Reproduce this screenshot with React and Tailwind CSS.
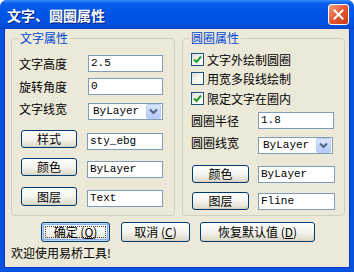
import { useState } from 'react';

const cjk = "font-['SimSun','Noto_Sans_CJK_SC',sans-serif]";
const mono = "font-['Liberation_Mono','Noto_Sans_CJK_SC',monospace]";

function XpButton({ children, className = '', focused = false }) {
  return (
    <button
      className={`relative flex items-center justify-center rounded-[3px] border border-[#003c74] bg-linear-to-b from-[#ffffff] via-[#f5f4ee] to-[#dcd9c9] text-[12px] leading-none text-black ${cjk} ${
        focused ? 'shadow-[inset_0_0_0_1px_#bcd4f6,inset_0_0_0_2px_#89adf3]' : 'shadow-[inset_0_-1px_0_#d6d0c5]'
      } ${className}`}
    >
      {focused && (
        <span className="absolute inset-[3px] border border-dotted border-[#444]" />
      )}
      <span className="relative">{children}</span>
    </button>
  );
}

function TextBox({ value, className = '' }) {
  return (
    <div
      className={`flex h-[17px] items-center border border-[#7f9db9] bg-white pl-[2px] text-[11px] text-black ${mono} ${className}`}
    >
      {value}
    </div>
  );
}

function Combo({ value, className = '' }) {
  return (
    <div
      className={`flex h-[17px] items-center justify-between border border-[#7f9db9] bg-white pl-[4px] pr-[1px] text-[11px] text-black ${mono} ${className}`}
    >
      <span>{value}</span>
      <span className="flex h-[15px] w-[15px] items-center justify-center rounded-[2px] border border-[#b9cdf3] bg-linear-to-b from-[#dbe6fd] to-[#b4c9f7]">
        <svg width="9" height="7" viewBox="0 0 9 7">
          <path d="M1 1.5 L4.5 5 L8 1.5" fill="none" stroke="#4d6185" strokeWidth="2" />
        </svg>
      </span>
    </div>
  );
}

function Check({ checked, label, onToggle }) {
  return (
    <div className="flex h-[13px] items-center pl-[8px]" onClick={onToggle}>
      <span className="flex h-[13px] w-[13px] items-center justify-center border border-[#1c5180] bg-linear-to-br from-[#dcdcd7] via-[#f6f6f3] to-[#ffffff]">
        {checked && (
          <svg width="9" height="9" viewBox="0 0 9 9">
            <path d="M1 4.5 L3.5 7 L8 1.5" fill="none" stroke="#21a121" strokeWidth="2" />
          </svg>
        )}
      </span>
      <span className={`ml-[3px] text-[12px] leading-none text-black ${cjk}`}>{label}</span>
    </div>
  );
}

function GroupBox({ title, className = '', children }) {
  return (
    <div className={`relative h-[178px] rounded-[4px] border border-[#d0d0bf] ${className}`}>
      <span className={`absolute -top-[8px] left-[6px] bg-[#ece9d8] px-[2px] text-[12px] leading-[14px] text-[#0046d5] ${cjk}`}>
        {title}
      </span>
      {children}
    </div>
  );
}

export default function App() {
  const [checks, setChecks] = useState([true, false, true]);
  const toggle = (i) => setChecks((c) => c.map((v, j) => (j === i ? !v : v)));

  return (
    <div className="flex h-[272px] w-[354px] flex-col overflow-hidden rounded-t-[7px] bg-[#0a52dc]">
      {/* TITLE BAR */}
      <div className="flex h-[29px] shrink-0 items-center justify-between bg-[linear-gradient(to_bottom,#3b8cf8_0%,#0a5cec_12%,#0055e6_45%,#0052e2_80%,#0046cc_100%)] pl-[7px] pr-[5px]">
        <span className={`text-[14px] font-bold leading-none text-white [text-shadow:1px_1px_0_#0a1e7a] ${cjk}`}>
          文字、圆圈属性
        </span>
        <span className="flex h-[21px] w-[21px] items-center justify-center rounded-[3px] border border-white bg-linear-to-br from-[#f0a080] via-[#e2572f] to-[#c73a18]">
          <svg width="11" height="11" viewBox="0 0 11 11">
            <path d="M1.5 1.5 L9.5 9.5 M9.5 1.5 L1.5 9.5" stroke="white" strokeWidth="2" strokeLinecap="square" />
          </svg>
        </span>
      </div>

      {/* BODY */}
      <div className="mx-[4px] mb-[4px] flex flex-1 flex-col border-l border-r border-b border-[#0831d9] bg-[#ece9d8] pl-[6px] pt-[9px]">
        <div className="flex gap-[7px]">
          <GroupBox title="文字属性" className="w-[164px]">
            <div className="flex flex-col pl-[7px] pt-[16px]">
              <div className="flex h-[17px] items-center">
                <span className={`w-[69px] text-[12px] ${cjk}`}>文字高度</span>
                <TextBox value="2.5" className="w-[75px]" />
              </div>
              <div className="mt-[6px] flex h-[17px] items-center">
                <span className={`w-[69px] text-[12px] ${cjk}`}>旋转角度</span>
                <TextBox value="0" className="w-[75px]" />
              </div>
              <div className="mt-[8px] flex h-[17px] items-center">
                <span className={`w-[69px] -translate-y-[3px] text-[12px] ${cjk}`}>文字线宽</span>
                <Combo value="ByLayer" className="w-[75px]" />
              </div>
              <div className="mt-[10px] flex h-[20px] items-start pl-[2px]">
                <XpButton className="h-[18px] w-[56px]">样式</XpButton>
                <TextBox value="sty_ebg" className="ml-[10px] mt-[3px] w-[76px]" />
              </div>
              <div className="mt-[8px] flex h-[20px] items-start pl-[2px]">
                <XpButton className="h-[18px] w-[56px]">颜色</XpButton>
                <TextBox value="ByLayer" className="ml-[10px] mt-[3px] w-[76px]" />
              </div>
              <div className="mt-[9px] flex h-[20px] items-start pl-[2px]">
                <XpButton className="h-[19px] w-[56px]">图层</XpButton>
                <TextBox value="Text" className="ml-[10px] mt-[3px] w-[76px]" />
              </div>
            </div>
          </GroupBox>

          <GroupBox title="圆圈属性" className="w-[163px]">
            <div className="flex flex-col pt-[14px]">
              <Check checked={checks[0]} label="文字外绘制圆圈" onToggle={() => toggle(0)} />
              <div className="mt-[6px]">
                <Check checked={checks[1]} label="用宽多段线绘制" onToggle={() => toggle(1)} />
              </div>
              <div className="mt-[7px]">
                <Check checked={checks[2]} label="限定文字在圈内" onToggle={() => toggle(2)} />
              </div>
              <div className="mt-[7px] flex h-[17px] items-center pl-[8px]">
                <span className={`w-[67px] text-[12px] ${cjk}`}>圆圈半径</span>
                <TextBox value="1.8" className="w-[76px]" />
              </div>
              <div className="mt-[8px] flex h-[17px] items-center pl-[8px]">
                <span className={`w-[67px] -translate-y-[3px] text-[12px] ${cjk}`}>圆圈线宽</span>
                <Combo value="ByLayer" className="w-[75px]" />
              </div>
              <div className="mt-[11px] flex h-[18px] items-start pl-[9px]">
                <XpButton className="h-[18px] w-[57px]">颜色</XpButton>
                <TextBox value="ByLayer" className="ml-[9px] mt-[1px] w-[77px]" />
              </div>
              <div className="mt-[9px] flex h-[18px] items-start pl-[9px]">
                <XpButton className="h-[18px] w-[57px]">图层</XpButton>
                <TextBox value="Fline" className="ml-[9px] mt-[1px] w-[77px]" />
              </div>
            </div>
          </GroupBox>
        </div>

        {/* ACTIONS */}
        <div className="mt-[6px] flex pl-[30px]">
          <XpButton focused className="h-[20px] w-[69px]">
            确定 (<span className="underline">O</span>)
          </XpButton>
          <XpButton className="ml-[11px] h-[20px] w-[69px]">
            取消 (<span className="underline">C</span>)
          </XpButton>
          <XpButton className="ml-[10px] h-[20px] w-[115px]">
            恢复默认值 (<span className="underline">D</span>)
          </XpButton>
        </div>

        <div className={`mt-[4px] text-[12px] leading-[14px] text-black ${cjk}`}>欢迎使用易桥工具!</div>
      </div>
    </div>
  );
}
